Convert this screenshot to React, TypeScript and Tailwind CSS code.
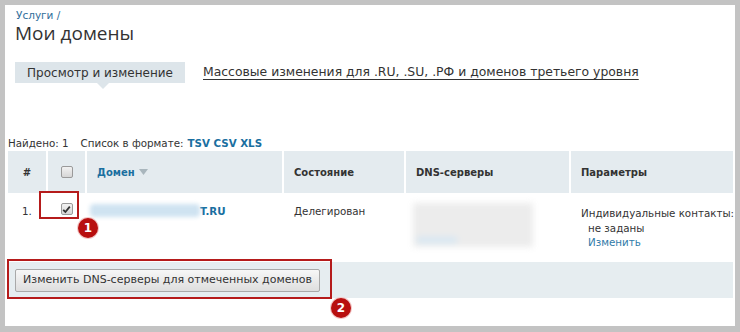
const font = { fontFamily: '"DejaVu Sans", Verdana, sans-serif' }

function Badge({ n, className }: { n: string; className: string }) {
  return (
    <div
      className={`absolute w-[20px] h-[20px] rounded-full bg-[#b80f0f] text-white text-[12px] font-bold flex items-center justify-center shadow-[0_0_0_1px_#f3c9c9] ${className}`}
    >
      {n}
    </div>
  )
}

function Checkbox({ checked }: { checked?: boolean }) {
  return (
    <div className="w-[12px] h-[12px] rounded-[2px] border border-[#9a9a9a] bg-gradient-to-b from-[#f2f2f2] to-[#d6d6d6] flex items-center justify-center">
      {checked && (
        <svg width="9" height="9" viewBox="0 0 9 9">
          <path d="M1.2 4.8 L3.4 7 L7.8 1.6" fill="none" stroke="#333" strokeWidth="1.8" />
        </svg>
      )}
    </div>
  )
}

export default function App() {
  return (
    <div className="w-[740px] h-[332px] bg-[#c3c3c3] pt-[5px] pl-[5px] pr-[5px] pb-[6px]" style={font}>
      <div className="relative h-full bg-white flex flex-col text-[#333]">
        <div className="pl-[11px] pt-[4px] text-[10.5px] leading-[13px] text-[#2f6e9a]">Услуги /</div>
        <div
          className="pl-[10px] text-[19px] leading-[22px] text-[#333]"
          style={{ fontFamily: '"Open Sans", "DejaVu Sans", sans-serif' }}
        >
          Мои домены
        </div>

        <div className="mt-[18px] ml-[10px] flex items-center">
          <div className="relative h-[21px] w-[170px] bg-[#dde5ea] flex items-center justify-center text-[12px]">
            Просмотр и изменение
            <div className="absolute left-[82px] top-[21px] w-0 h-0 border-l-[6px] border-r-[6px] border-t-[6px] border-l-transparent border-r-transparent border-t-[#dde5ea]" />
          </div>
          <a className="ml-[18px] text-[12.4px] underline underline-offset-[3px] text-[#333]">
            Массовые изменения для .RU, .SU, .РФ и доменов третьего уровня
          </a>
        </div>

        <div className="mt-[53px] ml-[3px] text-[10.3px] leading-[14px] flex">
          <span>Найдено: 1</span>
          <span className="ml-[12px]">Список в формате:</span>
          <span className="ml-[4px] font-bold text-[#1a6fa0]">TSV CSV XLS</span>
        </div>

        <div className="mt-[1px] ml-[3px] mr-[2px] text-[10.3px]">
          <div className="grid grid-cols-[38px_37px_195px_120px_163px_1fr] gap-x-[2px] h-[42px] font-bold text-[10px]">
            <div className="bg-[#e4ebef] flex items-center justify-center">#</div>
            <div className="bg-[#e4ebef] flex items-center justify-center">
              <Checkbox />
            </div>
            <div className="bg-[#e4ebef] flex items-center pl-[10px] text-[#1a6fa0]">
              Домен
              <svg className="ml-[4px]" width="9" height="6" viewBox="0 0 9 6">
                <path d="M0 0 H9 L4.5 6 Z" fill="#a9b6bd" />
              </svg>
            </div>
            <div className="bg-[#e4ebef] flex items-center pl-[10px]">Состояние</div>
            <div className="bg-[#e4ebef] flex items-center pl-[10px]">DNS-серверы</div>
            <div className="bg-[#e4ebef] flex items-center pl-[10px]">Параметры</div>
          </div>

          <div className="grid grid-cols-[38px_37px_195px_120px_163px_1fr] gap-x-[2px] h-[69px] leading-[14px]">
            <div className="pt-[11px] pl-[14px]">1.</div>
            <div className="pt-[10px] flex justify-center">
              <Checkbox checked />
            </div>
            <div className="pt-[11px] pl-[3px] flex items-start">
              <div className="w-[110px] h-[13px] bg-[#cfe3f1] blur-[2px] rounded" />
              <span className="font-bold text-[#1a6fa0]">T.RU</span>
            </div>
            <div className="pt-[11px] pl-[10px]">Делегирован</div>
            <div className="pt-[10px] pl-[7px]">
              <div className="w-[120px] h-[44px] bg-[#ececec] blur-[3px] relative">
                <div className="absolute left-[4px] top-[34px] w-[40px] h-[6px] bg-[#d6e7f3]" />
              </div>
            </div>
            <div className="pt-[13px] pl-[10px] whitespace-nowrap">
              <div>Индивидуальные контакты:</div>
              <div className="pl-[7px] mt-[1px]">не заданы</div>
              <div className="pl-[7px] text-[#2f7aa8]">Изменить</div>
            </div>
          </div>

          <div className="h-[36px] bg-[#e6edf0] flex items-center pl-[7px]">
            <button
              className="h-[23px] w-[305px] rounded-[2px] border border-[#a9a9a9] bg-gradient-to-b from-[#f7f7f7] to-[#dedede] text-[11px] text-[#333] flex items-center justify-center"
              style={font}
            >
              Изменить DNS-серверы для отмеченных доменов
            </button>
          </div>
        </div>

        <div className="absolute left-[34px] top-[186px] w-[40px] h-[28px] border-2 border-[#b51b1b]" />
        <Badge n="1" className="left-[73px] top-[213px]" />
        <div className="absolute left-[2px] top-[254px] w-[325px] h-[40px] border-2 border-[#b51b1b]" />
        <Badge n="2" className="left-[326px] top-[293px]" />
      </div>
    </div>
  )
}
